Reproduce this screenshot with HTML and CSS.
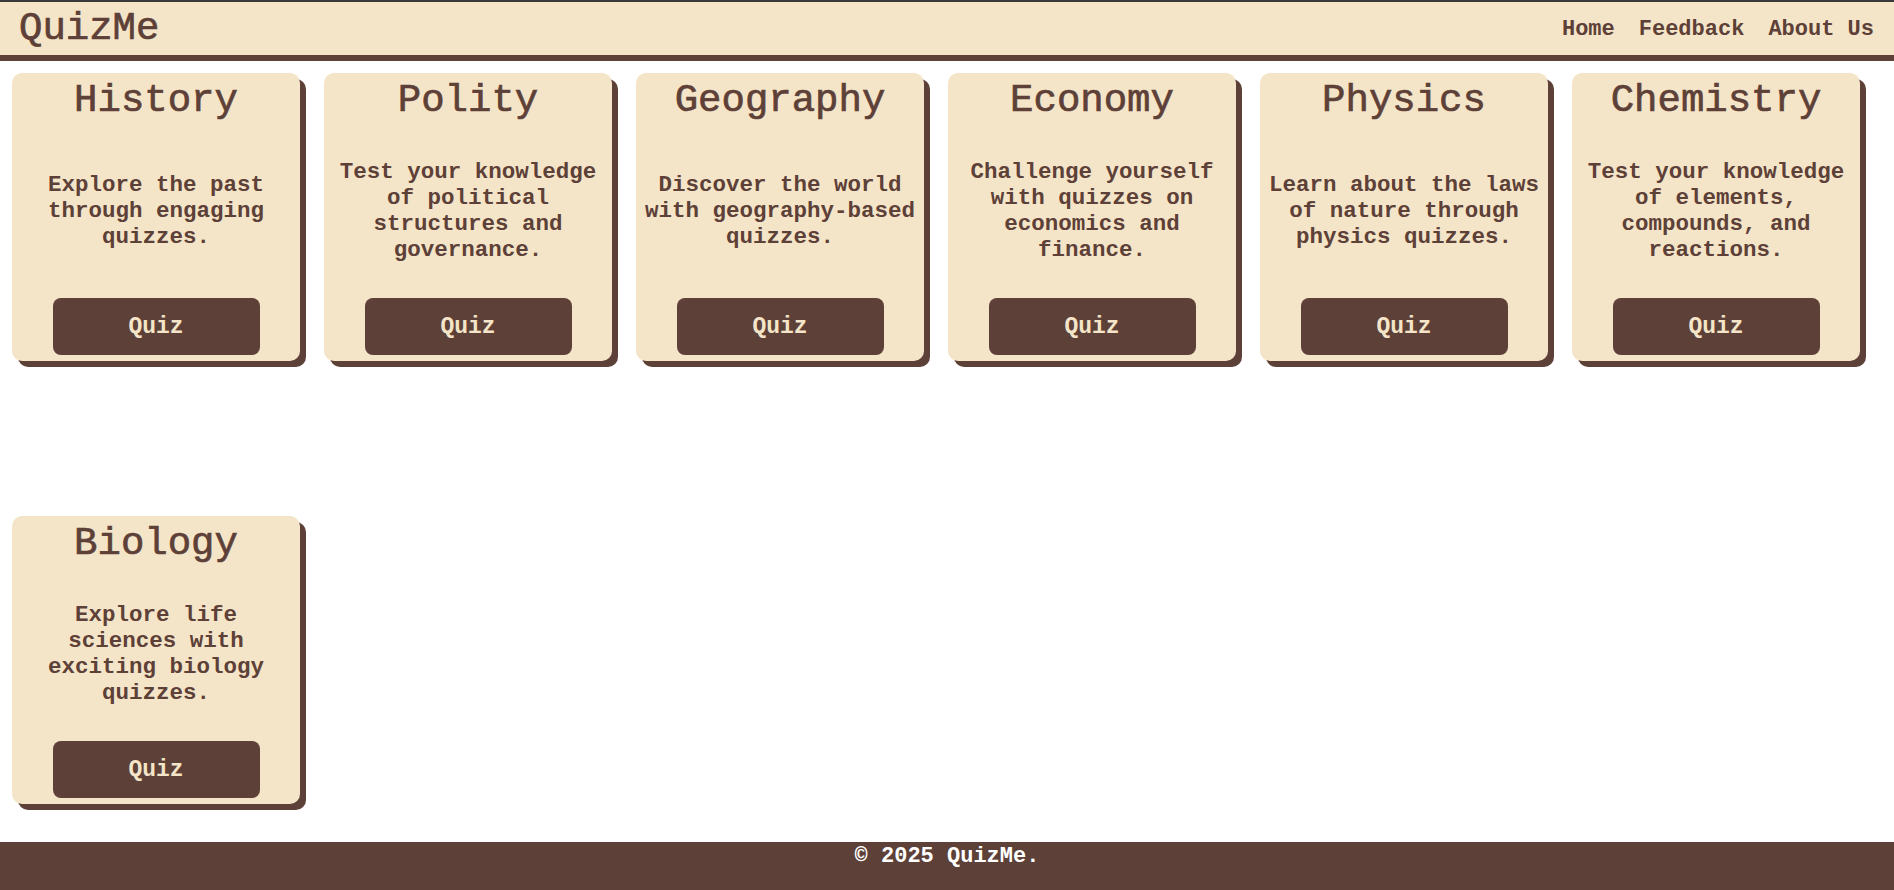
FILE: index.html
```html
<!DOCTYPE html>
<html lang="en">
<head>
<meta charset="utf-8">
<title>QuizMe</title>
<link rel="stylesheet" href="styles.css">
</head>
<body>
<header class="site-header">
  <div class="brand">QuizMe</div>
  <nav class="nav">
    <a href="#" class="nav-link">Home</a>
    <a href="#" class="nav-link">Feedback</a>
    <a href="#" class="nav-link">About Us</a>
  </nav>
</header>
<main class="cards">
  <div class="card">
    <h2 class="card-title">History</h2>
    <div class="card-body"><p class="card-text">Explore the past through engaging quizzes.</p></div>
    <a href="#" class="quiz-btn">Quiz</a>
  </div>
  <div class="card">
    <h2 class="card-title">Polity</h2>
    <div class="card-body"><p class="card-text">Test your knowledge of political structures and governance.</p></div>
    <a href="#" class="quiz-btn">Quiz</a>
  </div>
  <div class="card">
    <h2 class="card-title">Geography</h2>
    <div class="card-body"><p class="card-text">Discover the world with geography-based quizzes.</p></div>
    <a href="#" class="quiz-btn">Quiz</a>
  </div>
  <div class="card">
    <h2 class="card-title">Economy</h2>
    <div class="card-body"><p class="card-text">Challenge yourself with quizzes on economics and finance.</p></div>
    <a href="#" class="quiz-btn">Quiz</a>
  </div>
  <div class="card">
    <h2 class="card-title">Physics</h2>
    <div class="card-body"><p class="card-text">Learn about the laws of nature through physics quizzes.</p></div>
    <a href="#" class="quiz-btn">Quiz</a>
  </div>
  <div class="card">
    <h2 class="card-title">Chemistry</h2>
    <div class="card-body"><p class="card-text">Test your knowledge of elements, compounds, and reactions.</p></div>
    <a href="#" class="quiz-btn">Quiz</a>
  </div>
  <div class="card">
    <h2 class="card-title">Biology</h2>
    <div class="card-body"><p class="card-text">Explore life sciences with exciting biology quizzes.</p></div>
    <a href="#" class="quiz-btn">Quiz</a>
  </div>
</main>
<footer class="site-footer">
  <p class="footer-text">&copy; 2025 QuizMe.</p>
</footer>
</body>
</html>
```
FILE: styles.css
```css
* { box-sizing: border-box; }
html, body { margin: 0; padding: 0; }
body {
  font-family: "Liberation Mono", "Courier New", monospace;
  color: #5d4037;
  background: #ffffff;
  border-top: 2px solid #383838;
}
.site-header {
  display: flex;
  align-items: center;
  justify-content: space-between;
  height: 59px;
  padding: 1px 20px 0 19px;
  background: #f5e5c8;
  border-bottom: 6px solid #5d4037;
}
.brand {
  font-size: 39px;
  font-weight: normal;
  -webkit-text-stroke: 0.7px #5d4037;
  color: #5d4037;
}
.nav {
  display: flex;
  gap: 24px;
}
.nav-link {
  font-size: 22px;
  font-weight: bold;
  color: #5d4037;
  text-decoration: none;
}
.cards {
  display: flex;
  flex-wrap: wrap;
  align-content: flex-start;
  column-gap: 24px;
  row-gap: 155px;
  padding: 12px 12px 38px 12px;
}
.card {
  width: 288px;
  height: 288px;
  display: flex;
  flex-direction: column;
  align-items: center;
  padding: 6px 6px 6px;
  background: #f5e5c8;
  border-radius: 10px;
  box-shadow: 6px 6px 0 #5d4037;
}
.card-title {
  margin: 0;
  font-size: 39px;
  font-weight: normal;
  -webkit-text-stroke: 0.7px #5d4037;
  line-height: 44px;
  text-align: center;
}
.card-body {
  flex: 1;
  display: flex;
  align-items: center;
  justify-content: center;
}
.card-text {
  margin: 0;
  font-size: 22.5px;
  font-weight: bold;
  line-height: 26px;
  text-align: center;
}
.quiz-btn {
  display: flex;
  align-items: center;
  justify-content: center;
  width: 207px;
  height: 57px;
  background: #5d4037;
  color: #f5e5c8;
  border-radius: 8px;
  font-size: 23px;
  font-weight: bold;
  text-decoration: none;
}
.site-footer {
  height: 48px;
  background: #5d4037;
  color: #ffffff;
  text-align: center;
}
.footer-text {
  margin: 0;
  padding-top: 2px;
  font-size: 22px;
  font-weight: bold;
  line-height: 25px;
}
```
